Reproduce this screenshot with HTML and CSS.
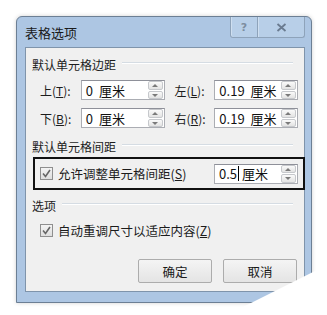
FILE: index.html
```html
<!DOCTYPE html>
<html>
  <head>
    <meta charset="utf-8">
    <link rel="stylesheet" href="styles.css">
  </head>
  <body>
    <div class="dialog">
      <div class="titlebar">
        <span class="title">表格选项</span>
        <div class="caption">
          <span class="cap-btn help">?</span>
          <span class="cap-btn close">
            <svg width="11" height="9" viewBox="0 0 11 9"><path d="M1.5 1 L9.5 8 M9.5 1 L1.5 8" stroke="#6a7b90" stroke-width="1.8"/></svg>
          </span>
        </div>
      </div>
      <div class="client">
        <div class="group-title"><span>默认单元格边距</span><i></i></div>
        <div class="margins">
          <div class="row">
            <label class="lbl">上(<u>T</u>):</label>
            <div class="spin-box"><span class="val">0 厘米</span><span class="spin"><b class="up"></b><b class="down"></b></span></div>
            <label class="lbl lbl-r">左(<u>L</u>):</label>
            <div class="spin-box"><span class="val">0.19 厘米</span><span class="spin"><b class="up"></b><b class="down"></b></span></div>
          </div>
          <div class="row">
            <label class="lbl">下(<u>B</u>):</label>
            <div class="spin-box"><span class="val">0 厘米</span><span class="spin"><b class="up"></b><b class="down"></b></span></div>
            <label class="lbl lbl-r">右(<u>R</u>):</label>
            <div class="spin-box"><span class="val">0.19 厘米</span><span class="spin"><b class="up"></b><b class="down"></b></span></div>
          </div>
        </div>
        <div class="group-title second"><span>默认单元格间距</span><i></i></div>
        <div class="spacing-box">
          <div class="check">
            <span class="box"><svg width="9" height="9" viewBox="0 0 9 9"><path d="M1 4.5 L3.5 7.5 L8 1" fill="none" stroke="#666" stroke-width="1.6"/></svg></span>
            <span>允许调整单元格间距(<u>S</u>)</span>
          </div>
          <div class="spin-box"><span class="val">0.5<em class="caret"></em>厘米</span><span class="spin"><b class="up"></b><b class="down"></b></span></div>
        </div>
        <div class="group-title third"><span>选项</span><i></i></div>
        <div class="check option">
          <span class="box"><svg width="9" height="9" viewBox="0 0 9 9"><path d="M1 4.5 L3.5 7.5 L8 1" fill="none" stroke="#666" stroke-width="1.6"/></svg></span>
          <span>自动重调尺寸以适应内容(<u>Z</u>)</span>
        </div>
        <div class="buttons">
          <button class="btn">确定</button>
          <button class="btn">取消</button>
        </div>
      </div>
    </div>
    <div class="curl"></div>
  </body>
</html>
```

FILE: styles.css
```css
body {
  margin: 0;
  width: 327px;
  height: 315px;
  overflow: hidden;
  background: #fff;
  position: relative;
  font-family: "Noto Sans CJK SC", "Noto Sans", sans-serif;
  font-size: 12px;
  color: #1c1c1c;
}

.dialog {
  margin: 16px 0 0 16px;
  width: 296px;
  height: 287px;
  box-sizing: border-box;
  border: 1px solid #6c7f94;
  border-radius: 6px 6px 0 0;
  background: #adc6e3;
  box-shadow: 0 0 4px rgba(0, 0, 0, 0.18);
  display: flex;
  flex-direction: column;
  padding: 0 6px 10px 8px;
}

.titlebar {
  height: 30px;
  display: flex;
  justify-content: space-between;
  align-items: flex-start;
}

.title {
  padding-top: 8px;
  font-size: 13px;
  line-height: 16px;
  color: #1a1a1a;
}

.caption {
  display: flex;
  height: 21px;
}

.cap-btn {
  height: 20px;
  display: flex;
  align-items: center;
  justify-content: center;
  border: 1px solid #8ea3ba;
  border-top: none;
  background: #b8cfe8;
  box-shadow: inset 1px 0 0 #cfdff0;
}

.help {
  width: 26px;
  font-family: "DejaVu Sans", sans-serif;
  font-size: 11px;
  font-weight: bold;
  color: #7d8da0;
  border-radius: 0 0 0 3px;
}

.close {
  width: 46px;
  border-left: none;
  border-radius: 0 0 3px 0;
}

.client {
  flex: 1;
  background: #f0f0f0;
  border: 1px solid #7f94ab;
  padding: 0 6px;
  display: flex;
  flex-direction: column;
}

.group-title {
  height: 32px;
  display: flex;
  align-items: center;
  padding-right: 5px;
}

.group-title i {
  flex: 1;
  margin-left: 6px;
  height: 0;
  border-top: 1px solid #d5dce3;
  border-bottom: 1px solid #fff;
  margin-top: -2px;
}

.group-title.second {
  height: 22px;
  margin-top: 7px;
}

.group-title.third {
  height: 22px;
  margin-top: 4px;
}

.margins {
  display: flex;
  flex-direction: column;
  gap: 8px;
}

.row {
  display: flex;
  align-items: center;
  height: 20px;
}

.lbl {
  width: 41px;
  margin-left: 8px;
}

.lbl-r {
  width: 40px;
  margin-left: 10px;
}

u {
  text-decoration: underline;
  text-underline-offset: 1px;
}

.spin-box {
  width: 84px;
  height: 20px;
  box-sizing: border-box;
  border: 1px solid #abadb3;
  border-top-color: #8e9099;
  background: #fff;
  display: flex;
  justify-content: space-between;
  align-items: center;
}

.val {
  padding-left: 4px;
  font-size: 13px;
  word-spacing: 3px;
  color: #111;
  display: flex;
  align-items: center;
}

.caret {
  display: inline-block;
  width: 1px;
  height: 15px;
  background: #000;
  margin: 0 3px 0 1px;
}

.spin {
  width: 15px;
  height: 18px;
  display: flex;
  flex-direction: column;
  gap: 1px;
  margin-right: 1px;
}

.spin b {
  flex: 1;
  border: 1px solid #c6c8cc;
  border-radius: 2px;
  background: linear-gradient(#fafafa, #e3e3e3);
  position: relative;
}

.spin b::after {
  content: "";
  position: absolute;
  left: 3px;
  top: 2px;
  border-left: 3px solid transparent;
  border-right: 3px solid transparent;
}

.spin .up::after {
  border-bottom: 3px solid #7a7a7a;
}

.spin .down::after {
  border-top: 3px solid #7a7a7a;
}

.spacing-box {
  margin-left: 1px;
  width: 272px;
  height: 33px;
  box-sizing: border-box;
  border: 2px solid #111;
  display: flex;
  align-items: center;
  justify-content: space-between;
  padding: 0 5px 0 5px;
}

.check {
  display: flex;
  align-items: center;
  gap: 5px;
  font-size: 12.5px;
}

.box {
  width: 11px;
  height: 11px;
  border: 1px solid #8f8f8f;
  background: linear-gradient(#f4f4f4, #dedede);
  display: flex;
  align-items: center;
  justify-content: center;
}

.option {
  height: 20px;
  margin-top: 4px;
  padding-left: 8px;
}

.buttons {
  margin-top: 19px;
  display: flex;
  gap: 11px;
  padding-left: 106px;
}

.btn {
  width: 74px;
  height: 24px;
  border: 1px solid #acacac;
  border-radius: 2px;
  background: linear-gradient(#f4f4f4, #e4e4e4);
  font-family: "Noto Sans CJK SC", sans-serif;
  font-size: 12.5px;
  color: #1a1a1a;
  padding: 0;
}

.curl {
  position: absolute;
  right: 0;
  bottom: 0;
  width: 100px;
  height: 50px;
  background: #fff;
  clip-path: polygon(100% 0, 100% 100%, 0 100%);
}
```
